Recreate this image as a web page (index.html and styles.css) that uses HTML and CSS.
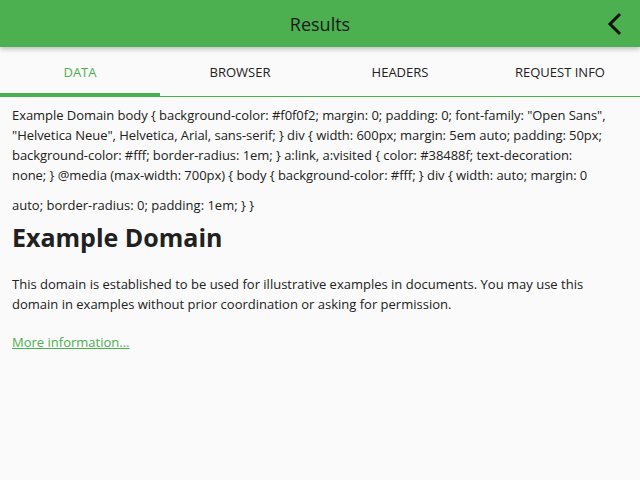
FILE: index.html
```html
<!DOCTYPE html>
<html>
<head>
<meta charset="utf-8">
<link rel="stylesheet" href="styles.css">
</head>
<body>
<header class="appbar">
  <h1 class="title">Results</h1>
  <button class="back" aria-label="Back">
    <svg width="18" height="24" viewBox="0 0 18 24"><path d="M14 2 L4 12 L14 22" fill="none" stroke="#111" stroke-width="3"/></svg>
  </button>
</header>
<nav class="tabs">
  <div class="tab active">DATA</div>
  <div class="tab">BROWSER</div>
  <div class="tab">HEADERS</div>
  <div class="tab">REQUEST INFO</div>
</nav>
<main class="content">
  <p class="raw">Example Domain body { background-color: #f0f0f2; margin: 0; padding: 0; font-family: "Open Sans", "Helvetica Neue", Helvetica, Arial, sans-serif; } div { width: 600px; margin: 5em auto; padding: 50px; background-color: #fff; border-radius: 1em; } a:link, a:visited { color: #38488f; text-decoration:<br>none; } @media (max-width: 700px) { body { background-color: #fff; } div { width: auto; margin: 0</p>
  <p class="raw2">auto; border-radius: 0; padding: 1em; } }</p>
  <h2 class="heading">Example Domain</h2>
  <p class="para">This domain is established to be used for illustrative examples in documents. You may use this domain in examples without prior coordination or asking for permission.</p>
  <p class="para more"><a class="link" href="#">More information...</a></p>
</main>
</body>
</html>
```

FILE: styles.css
```css
html, body {
  margin: 0;
  padding: 0;
  background: #fafafa;
  font-family: "Open Sans", "DejaVu Sans", sans-serif;
  color: #212121;
}
.appbar {
  height: 47px;
  background: #4caf50;
  display: flex;
  align-items: center;
  justify-content: center;
  position: relative;
  box-shadow: 0 2px 5px rgba(0,0,0,0.25);
  z-index: 2;
}
.title {
  margin: 0;
  font-size: 18px;
  font-weight: normal;
  color: #1b1b1b;
}
.back {
  position: absolute;
  right: 16px;
  top: 12px;
  border: 0;
  background: none;
  padding: 0;
  width: 18px;
  height: 24px;
}
.tabs {
  display: grid;
  grid-template-columns: repeat(4, 1fr);
  height: 49px;
  border-bottom: 1px solid #4caf50;
  background: #fafafa;
}
.tab {
  display: flex;
  align-items: center;
  justify-content: center;
  font-size: 13px;
  color: #222;
  padding-top: 1px;
}
.tab.active {
  color: #4caf50;
  box-shadow: inset 0 -3px 0 #4caf50;
}
.content {
  padding: 0 12px;
}
.raw {
  margin: 8px 0 0 0;
  font-size: 13px;
  line-height: 20px;
  letter-spacing: -0.05px;
}
.raw2 {
  margin: 10px 0 0 0;
  font-size: 13px;
  line-height: 20px;
}
.heading {
  margin: 4px 0 0 0;
  font-size: 25px;
  line-height: 36px;
  font-weight: bold;
}
.para {
  margin: 19px 0 0 0;
  font-size: 13px;
  line-height: 20px;
}
.para.more {
  margin-top: 18px;
}
.link {
  color: #4caf50;
}
```
